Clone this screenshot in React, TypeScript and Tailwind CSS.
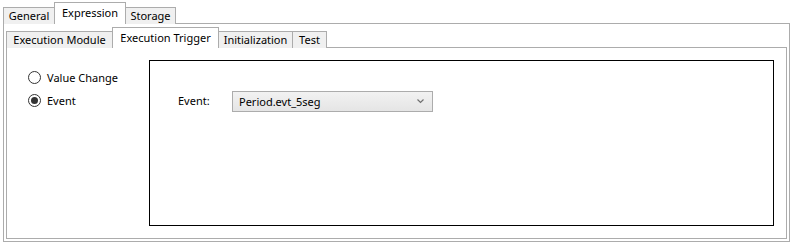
import React from "react";

const font = { fontFamily: '"Noto Sans", "Segoe UI", sans-serif' };

function Radio({ checked, label }: { checked?: boolean; label: string }) {
  return (
    <div className="flex items-center h-[20px]">
      <div className="w-[13px] h-[13px] rounded-full border border-[#333333] bg-white flex items-center justify-center">
        {checked && <div className="w-[7px] h-[7px] rounded-full bg-[#333333]" />}
      </div>
      <span className="ml-[6px] text-[11px] text-black leading-none">{label}</span>
    </div>
  );
}

export default function App() {
  return (
    <div className="w-[792px] h-[243px] bg-white text-black" style={font}>
      {/* outer tabs */}
      <div className="flex items-end h-[24px] pl-[3px] pt-[2px]">
        <div className="w-[52px] h-[17px] border border-b-0 border-[#acacac] bg-[#f0f0f0] flex items-center justify-center text-[11px] leading-none pb-[2px]">
          General
        </div>
        <div className="relative z-10 ml-[-1px] w-[72px] h-[22px] border border-b-0 border-[#acacac] bg-white flex items-start justify-center pt-[4px] text-[11px] leading-none">
          Expression
        </div>
        <div className="ml-[-1px] w-[51px] h-[17px] border border-b-0 border-[#acacac] bg-[#f0f0f0] flex items-center justify-center text-[11px] leading-none pb-[2px]">
          Storage
        </div>
      </div>
      {/* outer panel */}
      <div className="ml-[3px] mt-[-1px] w-[787px] h-[219px] border border-[#acacac] px-[2px] pb-[2px]">
        {/* inner tabs */}
        <div className="flex items-end h-[24px]">
          <div className="w-[107px] h-[17px] border border-b-0 border-[#acacac] bg-[#f0f0f0] flex items-center justify-center text-[11px] leading-none pb-[2px]">
            Execution Module
          </div>
          <div className="relative z-10 ml-[-1px] w-[107px] h-[21px] border border-b-0 border-[#acacac] bg-white flex items-start justify-center pt-[4px] text-[11px] leading-none">
            Execution Trigger
          </div>
          <div className="ml-[-1px] w-[75px] h-[17px] border border-b-0 border-[#acacac] bg-[#f0f0f0] flex items-center justify-center text-[11px] leading-none pb-[2px]">
            Initialization
          </div>
          <div className="ml-[-1px] w-[35px] h-[17px] border border-b-0 border-[#acacac] bg-[#f0f0f0] flex items-center justify-center text-[11px] leading-none pb-[2px]">
            Test
          </div>
        </div>
        {/* inner panel */}
        <div className="mt-[-1px] w-[781px] h-[192px] border border-[#acacac] flex">
          <div className="w-[142px] pl-[21px] pt-[19px] flex flex-col gap-[3px]">
            <Radio label="Value Change" />
            <Radio label="Event" checked />
          </div>
          <div className="mt-[12px] w-[625px] h-[166px] border border-black pl-[28px] pt-[30px]">
            <div className="flex items-center">
              <span className="w-[54px] text-[11px] leading-none pb-[3px]">Event:</span>
              <div className="w-[201px] h-[21px] border border-[#acacac] bg-gradient-to-b from-[#f2f2f2] to-[#e5e5e5] flex items-center justify-between pl-[6px] pr-[8px]">
                <span className="text-[11px] leading-none">Period.evt_5seg</span>
                <svg width="7" height="5" viewBox="0 0 7 5">
                  <path d="M0.5 0.5 L3.5 3.5 L6.5 0.5" fill="none" stroke="#707070" strokeWidth="1.2" />
                </svg>
              </div>
            </div>
          </div>
        </div>
      </div>
    </div>
  );
}
